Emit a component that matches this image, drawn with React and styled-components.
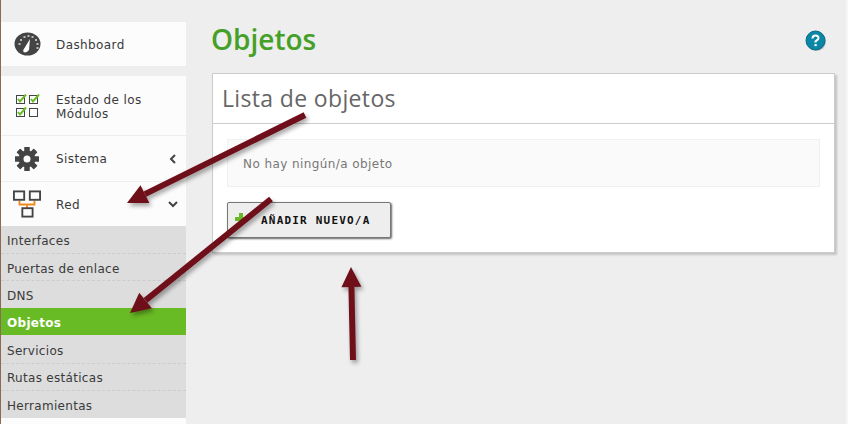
import React from "react";
import styled, { createGlobalStyle } from "styled-components";

const GlobalStyle = createGlobalStyle`
  html, body {
    margin: 0;
    padding: 0;
    height: 424px;
    overflow: hidden;
    background: #eeeeee;
  }
  * { box-sizing: border-box; }
`;

const Page = styled.div`
  position: relative;
  display: flex;
  width: 848px;
  height: 424px;
  overflow: hidden;
  background: #eeeeee;
  border-left: 1px solid #8b6b55;
  border-right: 2px solid #f6f6f6;
  font-family: "DejaVu Sans", Verdana, sans-serif;
`;

const Sidebar = styled.nav`
  width: 185px;
  flex: none;
  padding-top: 22px;
  display: flex;
  flex-direction: column;
`;

const MenuGroup = styled.div`
  background: #fcfcfc;
  margin-bottom: ${(p) => p.$gap || 0}px;
`;

const MenuItem = styled.div`
  display: flex;
  align-items: center;
  height: ${(p) => p.$height}px;
  border-bottom: ${(p) => (p.$line ? "1px solid #eeeeee" : "none")};
  color: #3a3a3a;
  font-size: 12px;
  letter-spacing: 0.4px;
  line-height: 14px;
`;

const IconSlot = styled.div`
  width: 55px;
  flex: none;
  display: flex;
  justify-content: center;
  padding-right: 3px;
`;

const ItemLabel = styled.span`
  flex: 1;
  padding-top: ${(p) => p.$nudge || 0}px;
`;

const Caret = styled.div`
  width: 25px;
  flex: none;
  display: flex;
  justify-content: center;
  padding-right: 2px;
`;

const SubMenu = styled.div`
  background: #dddddd;
  height: 192px;
`;

const SubItem = styled.div`
  height: ${(p) => p.$height || 27}px;
  padding: ${(p) => p.$nudge ?? 3}px 0 0 6px;
  display: flex;
  align-items: center;
  font-size: 12px;
  letter-spacing: 0.3px;
  color: ${(p) => (p.$active ? "#ffffff" : "#3a3a3a")};
  font-weight: ${(p) => (p.$active ? 700 : 400)};
  background: ${(p) => (p.$active ? "#69bb25" : "transparent")};
  border-top: ${(p) => (p.$dashed ? "1px dashed #cccccc" : "none")};
`;

const SidebarEnd = styled.div`
  flex: 1;
  background: #fcfcfc;
`;

const Main = styled.main`
  flex: 1;
  padding: 0 11px 0 26px;
`;

const TitleRow = styled.div`
  display: flex;
  align-items: center;
  justify-content: space-between;
  height: 73px;
  padding: 9px 8px 0 0;
`;

const Title = styled.h1`
  margin: -5px 0 0 -1px;
  font-family: "Open Sans", sans-serif;
  font-size: 28px;
  font-weight: 600;
  color: #45a028;
`;

const Card = styled.section`
  background: #ffffff;
  border: 1px solid #cccccc;
  height: 180px;
  box-shadow: 2px 2px 2px #c4c4c4;
`;

const CardHeader = styled.div`
  height: 50px;
  border-bottom: 1px solid #cccccc;
  padding: 0 0 2px 9px;
  display: flex;
  align-items: center;
  font-family: "Open Sans", sans-serif;
  font-size: 23px;
  letter-spacing: 0.35px;
  color: #666666;
`;

const CardBody = styled.div`
  padding: 15px 14px;
`;

const Notice = styled.div`
  height: 48px;
  background: #fafafa;
  border: 1px solid #f0f0f0;
  padding: 1px 0 0 15px;
  display: flex;
  align-items: center;
  font-size: 12px;
  letter-spacing: 0.42px;
  color: #777777;
`;

const AddButton = styled.button`
  margin-top: 15px;
  width: 164px;
  height: 36px;
  display: flex;
  align-items: center;
  padding: 0 0 0 7px;
  background: #eeeeee;
  border: 1px solid #777777;
  border-radius: 2px;
  box-shadow: 1px 1px 2px #666666;
  font-family: "DejaVu Sans Mono", "Liberation Mono", monospace;
  font-size: 11px;
  font-weight: 700;
  letter-spacing: 1.2px;
  color: #111111;
`;

const PlusIcon = styled.svg`
  width: 12px;
  height: 12px;
  margin: -2px 14px 0 0;
  flex: none;
`;

const Arrows = styled.svg`
  position: absolute;
  left: -1px;
  top: 0;
  pointer-events: none;
  filter: drop-shadow(2px 3px 2px rgba(0, 0, 0, 0.35));
`;

function GaugeIcon() {
  return (
    <svg width="27" height="24" viewBox="0 0 26 24">
      <ellipse cx="13" cy="12" rx="13" ry="11.5" fill="#444444" />
      {[[4, 11], [5.5, 7], [9, 4], [13, 3], [17, 4], [20.5, 7], [22, 11], [22, 15]].map(
        ([x, y]) => (
          <rect key={`${x}-${y}`} x={x} y={y} width="2" height="2" fill="#bbbbbb" />
        )
      )}
      <path d="M15.5 7 L14.5 18 Q12 21.5 9 20 Q8 18 10 16 Z" fill="#ffffff" />
    </svg>
  );
}

function CheckBoxIcon({ checked }) {
  return (
    <g>
      <rect x="0.5" y="2.5" width="8" height="8" fill="none" stroke="#444444" />
      {checked && <path d="M2 6 L4 8.5 L10 1.5" fill="none" stroke="#69bb25" strokeWidth="2" />}
    </g>
  );
}

function ModulesIcon() {
  const boxes = [
    { x: 0, y: 0, checked: true },
    { x: 13, y: 0, checked: true },
    { x: 0, y: 13, checked: true },
    { x: 13, y: 13, checked: false },
  ];
  return (
    <svg width="26" height="24" viewBox="-2 1 26 24">
      {boxes.map((b) => (
        <g key={`${b.x}-${b.y}`} transform={`translate(${b.x} ${b.y})`}>
          <CheckBoxIcon checked={b.checked} />
        </g>
      ))}
    </svg>
  );
}

function GearIcon() {
  const teeth = [0, 45, 90, 135, 180, 225, 270, 315];
  return (
    <svg width="24" height="24" viewBox="0 0 24 24">
      {teeth.map((a) => (
        <rect key={a} x="9.5" y="0" width="5" height="24" fill="#444444" transform={`rotate(${a} 12 12)`} />
      ))}
      <circle cx="12" cy="12" r="8.5" fill="#444444" />
      <circle cx="12" cy="12" r="3.5" fill="#fcfcfc" />
    </svg>
  );
}

function NetworkIcon() {
  return (
    <svg width="28" height="28" viewBox="0 0 30 29">
      <path d="M7 11 V15 H23 V11 M15 15 V19" fill="none" stroke="#f08a1d" strokeWidth="2" />
      <rect x="1" y="1" width="11" height="9" fill="none" stroke="#444444" strokeWidth="2" />
      <rect x="18" y="1" width="11" height="9" fill="none" stroke="#444444" strokeWidth="2" />
      <rect x="10" y="19" width="11" height="9" fill="none" stroke="#444444" strokeWidth="2" />
    </svg>
  );
}

function CaretLeft() {
  return (
    <svg width="7" height="10" viewBox="0 0 7 10">
      <path d="M6 1 L2 5 L6 9" fill="none" stroke="#444444" strokeWidth="2" />
    </svg>
  );
}

function CaretDown() {
  return (
    <svg width="10" height="7" viewBox="0 0 10 7">
      <path d="M1 1 L5 5 L9 1" fill="none" stroke="#444444" strokeWidth="2" />
    </svg>
  );
}

function HelpIcon() {
  return (
    <svg width="22" height="22" viewBox="0 0 22 22">
      <circle cx="11.5" cy="11.5" r="9.5" fill="#999999" opacity="0.6" />
      <circle cx="10.5" cy="10.5" r="9.5" fill="#0a86a6" stroke="#066a86" />
      <path d="M7.5 8.5 Q7.5 5.5 10.5 5.5 Q13.5 5.5 13.5 8 Q13.5 9.5 11.5 10.5 L10.5 11.5 V12.5" fill="none" stroke="#ffffff" strokeWidth="2" />
      <rect x="9.5" y="14" width="2.2" height="2.2" fill="#ffffff" />
    </svg>
  );
}

// arrows drawn on top of the screenshot: tail x/y to tip x/y
const arrowData = [
  { from: [305, 115], to: [127, 203] },
  { from: [271, 199], to: [130, 313] },
  { from: [353, 360], to: [351, 267] },
];

function Arrow({ from, to }) {
  const dx = to[0] - from[0];
  const dy = to[1] - from[1];
  const len = Math.hypot(dx, dy);
  const ux = dx / len;
  const uy = dy / len;
  const head = 20;
  const bx = to[0] - ux * head;
  const by = to[1] - uy * head;
  const wing = 10;
  const points = `${to[0]},${to[1]} ${bx - uy * wing},${by + ux * wing} ${bx + uy * wing},${by - ux * wing}`;
  return (
    <g>
      <line x1={from[0]} y1={from[1]} x2={bx} y2={by} stroke="#6e0f1a" strokeWidth="6" />
      <polygon points={points} fill="#6e0f1a" />
    </g>
  );
}

const subItems = [
  { label: "Interfaces" },
  { label: "Puertas de enlace", dashed: true },
  { label: "DNS", dashed: true, height: 28 },
  { label: "Objetos", active: true, nudge: 2 },
  { label: "Servicios", height: 28 },
  { label: "Rutas estáticas", dashed: true, nudge: 1 },
  { label: "Herramientas", dashed: true },
];

export default function App() {
  return (
    <>
      <GlobalStyle />
      <Page>
        <Sidebar>
          <MenuGroup $gap={10}>
            <MenuItem $height={44}>
              <IconSlot><GaugeIcon /></IconSlot>
              <ItemLabel $nudge={2}>Dashboard</ItemLabel>
            </MenuItem>
          </MenuGroup>
          <MenuGroup>
            <MenuItem $height={60} $line>
              <IconSlot><ModulesIcon /></IconSlot>
              <ItemLabel $nudge={2}>Estado de los<br />Módulos</ItemLabel>
            </MenuItem>
            <MenuItem $height={46} $line>
              <IconSlot><GearIcon /></IconSlot>
              <ItemLabel>Sistema</ItemLabel>
              <Caret><CaretLeft /></Caret>
            </MenuItem>
            <MenuItem $height={44}>
              <IconSlot><NetworkIcon /></IconSlot>
              <ItemLabel $nudge={2}>Red</ItemLabel>
              <Caret><CaretDown /></Caret>
            </MenuItem>
          </MenuGroup>
          <SubMenu>
            {subItems.map((item) => (
              <SubItem key={item.label} $active={item.active} $dashed={item.dashed} $height={item.height} $nudge={item.nudge}>
                {item.label}
              </SubItem>
            ))}
          </SubMenu>
          <SidebarEnd />
        </Sidebar>
        <Main>
          <TitleRow>
            <Title>Objetos</Title>
            <HelpIcon />
          </TitleRow>
          <Card>
            <CardHeader>Lista de objetos</CardHeader>
            <CardBody>
              <Notice>No hay ningún/a objeto</Notice>
              <AddButton>
                <PlusIcon viewBox="0 0 12 12">
                  <path d="M4 0 H8 V4 H12 V8 H8 V12 H4 V8 H0 V4 H4 Z" fill="#69bb25" />
                </PlusIcon>
                AÑADIR NUEVO/A
              </AddButton>
            </CardBody>
          </Card>
        </Main>
        <Arrows width="848" height="424" viewBox="0 0 848 424">
          {arrowData.map((a) => (
            <Arrow key={a.from.join()} from={a.from} to={a.to} />
          ))}
        </Arrows>
      </Page>
    </>
  );
}
